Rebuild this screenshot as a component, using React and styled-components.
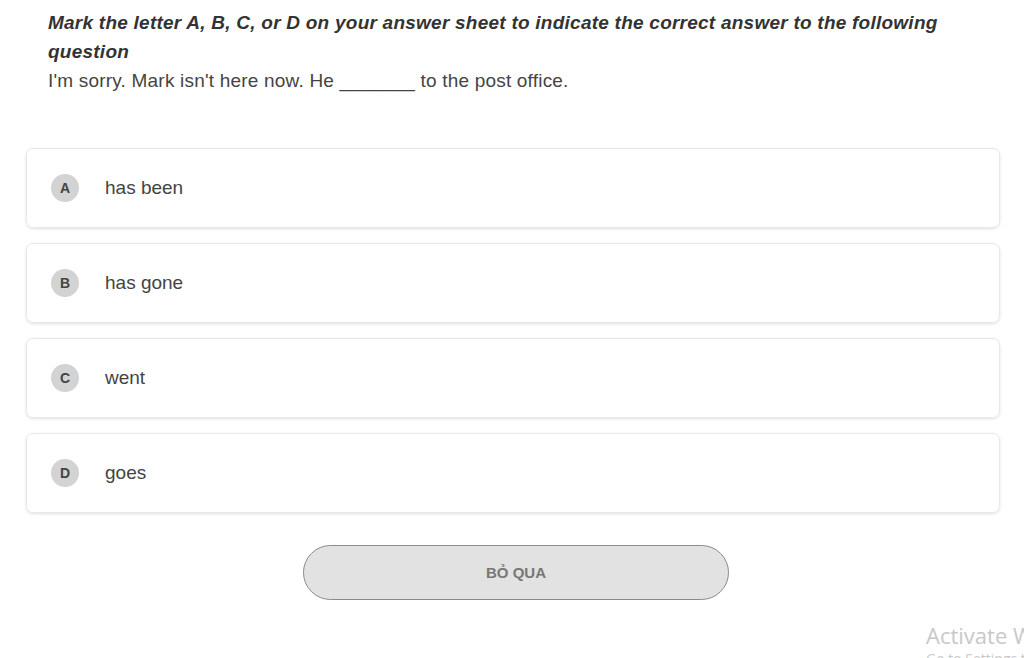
import React from "react";
import styled, { createGlobalStyle } from "styled-components";

const GlobalStyle = createGlobalStyle`
    body {
        margin: 0;
        background: #fff;
        font-family: "Liberation Sans", Arial, sans-serif;
    }
`

const Page = styled.div`
    padding: 8px 24px 0 26px;
    height: 658px;
    box-sizing: border-box;
    overflow: hidden;
    position: relative;
`

const Question = styled.div`
    padding: 0 22px;
    color: #333;

    h2 {
        margin: 0;
        font-size: 19px;
        letter-spacing: 0.24px;
        line-height: 29px;
        font-weight: bold;
        font-style: italic;
    }

    p {
        margin: 0;
        font-size: 19px;
        letter-spacing: 0.2px;
        line-height: 30px;
        color: #444;
    }
`

const Options = styled.ul`
    list-style: none;
    margin: 52px 0 0;
    padding: 0;
    display: flex;
    flex-direction: column;
    gap: 15px;
`

const Option = styled.li`
    height: 80px;
    box-sizing: border-box;
    display: flex;
    align-items: center;
    padding: 0 24px;
    gap: 26px;
    border: 1px solid #e8e8e8;
    border-radius: 7px;
    box-shadow: 0 1px 3px rgba(0, 0, 0, 0.12);
    cursor: pointer;
    font-size: 19px;
    color: #444;
`

const Badge = styled.span`
    width: 28px;
    height: 28px;
    border-radius: 50%;
    background: #d3d3d3;
    color: #444;
    font-size: 14px;
    font-weight: bold;
    display: flex;
    align-items: center;
    justify-content: center;
    flex-shrink: 0;
`

const Footer = styled.div`
    display: flex;
    justify-content: center;
    margin-top: 32px;
`

const SkipButton = styled.button`
    width: 426px;
    height: 55px;
    margin-left: 6px;
    border-radius: 28px;
    border: 1px solid #8a8a8a;
    background: #e2e2e2;
    color: #777;
    font-family: "Liberation Sans", Arial, sans-serif;
    font-size: 15px;
    font-weight: bold;
    cursor: pointer;
`

const Watermark = styled.div`
    position: absolute;
    left: 926px;
    top: 620px;
    color: #c8c8c8;
    font-family: "Open Sans", "Noto Sans", sans-serif;
    white-space: nowrap;

    div:first-child {
        font-size: 22px;
        line-height: 30px;
    }

    div:last-child {
        font-size: 14px;
        line-height: 18px;
    }
`

const options = [
    { letter: "A", text: "has been" },
    { letter: "B", text: "has gone" },
    { letter: "C", text: "went" },
    { letter: "D", text: "goes" },
]

const App = () => {
    return (
        <>
            <GlobalStyle />
            <Page>
                <Question>
                    <h2>Mark the letter A, B, C, or D on your answer sheet to indicate the correct answer to the following question</h2>
                    <p>I'm sorry. Mark isn't here now. He _______ to the post office.</p>
                </Question>

                <Options>
                    {options.map((o) => (
                        <Option key={o.letter}>
                            <Badge>{o.letter}</Badge>
                            {o.text}
                        </Option>
                    ))}
                </Options>

                <Footer>
                    <SkipButton>BỎ QUA</SkipButton>
                </Footer>

                <Watermark>
                    <div>Activate Windows</div>
                    <div>Go to Settings to activate Windows.</div>
                </Watermark>
            </Page>
        </>
    )
}

export default App;
